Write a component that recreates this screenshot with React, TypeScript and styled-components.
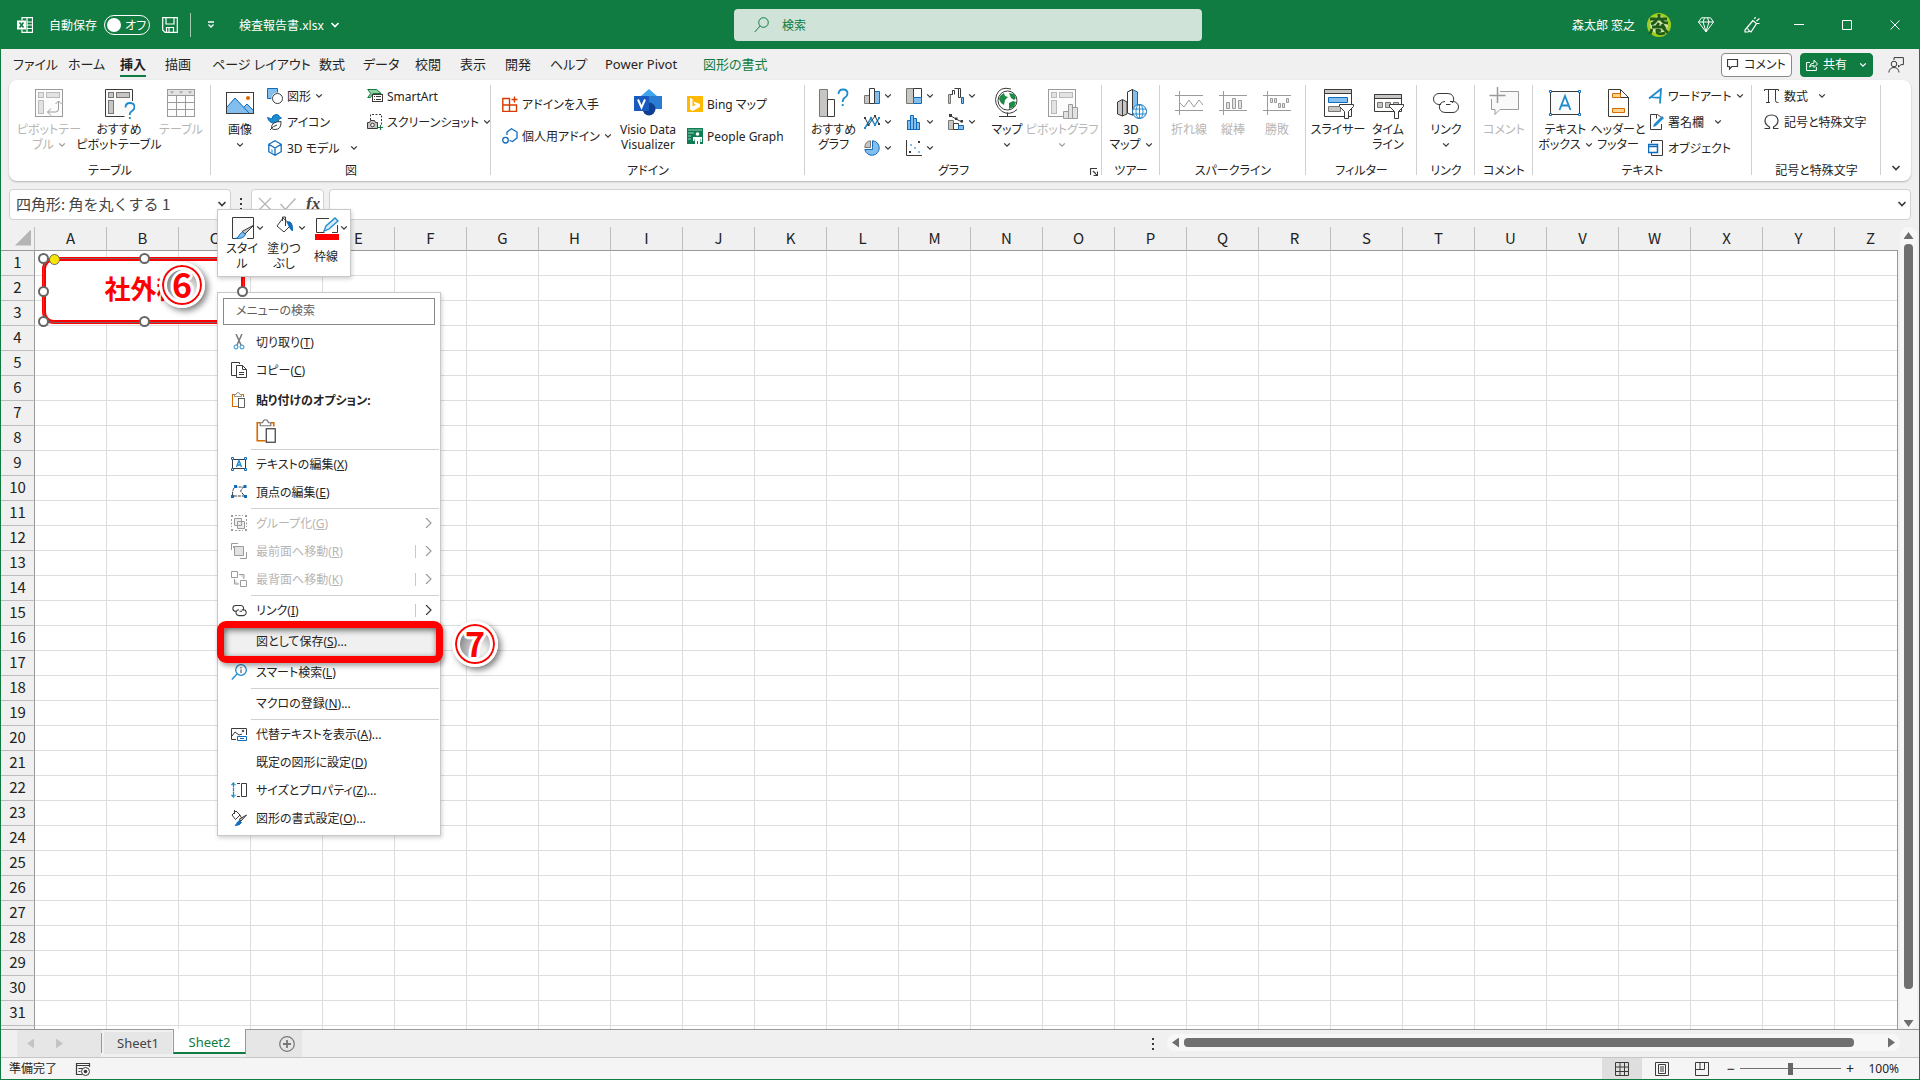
import React from "react";
import styled, { createGlobalStyle, css } from "styled-components";

const color = {
  brand: "#107c41",
  chrome: "#f0f0f0",
  text: "#252423",
  muted: "#b8b6b4",
  line: "#d1d1d1",
  ink: "#3b3a38",
  soft: "#c8c6c4",
  mid: "#797774",
  blue: "#1e8bcd",
  deep: "#0f6cbd",
  sky: "#83beec",
  red: "#ff0000",
};

const GlobalStyle = createGlobalStyle`
  *, *::before, *::after { box-sizing: border-box; }
  body {
    margin: 0;
    font-family: "Noto Sans", "Noto Sans CJK JP", sans-serif;
    font-size: 12px;
    line-height: 15px;
    color: ${color.text};
    font-feature-settings: "palt";
  }
  button, input { font: inherit; color: inherit; font-feature-settings: inherit; }
  button { padding: 0; border: 0; background: none; white-space: nowrap; }
  svg { display: block; flex: none; }
`;

/* ---------- Icons ---------- */

type IconProps = { size?: number; box?: number; stroke?: string; children: React.ReactNode };
const Icon = ({ size = 16, box, stroke = color.ink, children }: IconProps) => (
  <svg width={size} height={size} viewBox={`0 0 ${box ?? size} ${box ?? size}`} fill="none" stroke={stroke} strokeWidth={1} aria-hidden="true">
    {children}
  </svg>
);

const Chevron = ({ stroke = color.ink, size = 8 }: { stroke?: string; size?: number }) => (
  <svg width={size} height={size} viewBox="0 0 8 8" fill="none" stroke={stroke} strokeWidth={1.3} aria-hidden="true">
    <path d="M1.2 2.4 4 5.2 6.8 2.4" />
  </svg>
);

const PivotFrame = ({ children }: { children?: React.ReactNode }) => (
  <>
    <rect x="2.5" y="2.5" width="27" height="27" fill="#fafafa" stroke="none" />
    <rect x="5.5" y="5.5" width="5" height="5" fill={color.soft} stroke={color.mid} />
    <rect x="13.5" y="5.5" width="13" height="5" fill={color.soft} stroke={color.mid} />
    <rect x="5.5" y="13.5" width="5" height="13" fill={color.soft} stroke={color.mid} />
    {children}
  </>
);
const PivotTable = () => (
  <Icon size={32}>
    <PivotFrame />
    <rect x="2.5" y="2.5" width="27" height="27" />
    <path d="M25.5 14v8q0 3-3 3h-8M22.500 17l3-3 3 3M18 21.500l-3.500 3.500 3.500 3.500" />
  </Icon>
);
const RecommendedPivot = () => (
  <Icon size={32}>
    <PivotFrame />
    <path d="M29.500 14V2.500H2.500v27h19" />
    <path d="M22.500 20.500q0-4.500 4.500-4.500t4.500 4q0 2.500-2.500 4t-2.200 4M26.800 30v2" stroke={color.blue} strokeWidth="1.8" />
  </Icon>
);
const TableIcon = () => (
  <Icon size={32}>
    <rect x="2.5" y="2.5" width="27" height="27" fill="#fafafa" />
    <rect x="3" y="3" width="26" height="5.5" fill={color.soft} stroke="none" />
    <path d="M2.500 8.500h27M2.500 15.500h27M2.500 22.500h27M11.500 8.500v21M20.500 8.500v21" />
    <path d="m5 4.500 2 2 2-2zM14 4.500l2 2 2-2zM23 4.500l2 2 2-2z" fill={color.ink} stroke="none" />
  </Icon>
);
const Picture = () => (
  <Icon size={32}>
    <rect x="2.5" y="5.5" width="27" height="21" fill="#fff" />
    <path d="M3 20 11 11l9 9 3-3 6 6v3H3z" fill={color.sky} stroke="none" />
    <path d="M3 20 11 11l14 15M20 20l3-3 6 6" stroke={color.deep} />
    <circle cx="24" cy="11" r="2" fill="#e06c00" stroke="none" />
  </Icon>
);
const Shapes = () => (
  <Icon>
    <path d="M.5.5h10v10h-10z" fill={color.sky} stroke={color.deep} />
    <circle cx="10.5" cy="10.5" r="6" fill="#fff" stroke="none" />
    <circle cx="10.5" cy="10.5" r="5" fill="#fff" />
  </Icon>
);
const IconsIcon = () => (
  <Icon>
    <path d="M.5 3.500 5 5q0-4 4-4.500 3-.3 3.500 2.500l2 1-2.500 1q-.5 4-4 4.500-6-.3-7.500-6z" fill={color.blue} stroke={color.deep} />
    <path d="M4.500 14.500q-.5-7 9.500-7 .5 8-6 8-2 0-3.500-1zM3 16q3-4 7-5" fill="#fff" />
  </Icon>
);
const Cube = () => (
  <Icon stroke={color.deep}>
    <path d="m8 .8 6.200 3.500v7.400L8 15.200l-6.200-3.500V4.300zM1.800 4.300 8 8l6.200-3.700M8 8v7" fill="#fff" strokeWidth="1.3" />
    <path d="M4 9v3l2 1v-3z" fill={color.sky} stroke="none" />
  </Icon>
);
const SmartArt = () => (
  <Icon>
    <path d="M.7 1.500h9l4.500 4H6L3.500 9.500H.7l3-4z" fill="#92d3a4" stroke="#107c41" />
    <rect x="5.5" y="6.5" width="10" height="7" fill="#fff" />
    <path d="M7 8.500h1M9 8.500h5M7 11.500h1M9 11.500h5" />
  </Icon>
);
const Screenshot = () => (
  <Icon>
    <path d="M3.500 6V.5h11v10" strokeDasharray="2 1.5" />
    <path d="M.5 8.500h2l1-2h4l1 2h2v6H.5z" fill={color.soft} />
    <circle cx="5.5" cy="11" r="1.8" fill="#fff" />
    <path d="M13.500 11v5M11 13.500h5" stroke="#107c41" strokeWidth="1.2" />
  </Icon>
);
const GetAddins = () => (
  <Icon stroke="#d83b01">
    <path d="M.8 2.500h6.700v13H.8zM.8 9h13.700v6.500H7.500M7.500 9V5M12.500.5v6M9.500 3.500h6" strokeWidth="1.4" />
  </Icon>
);
const MyAddins = () => (
  <Icon stroke={color.deep}>
    <path d="M5 7V4l4.500-3.200L15 4v6l-4.500 3.500-3-1" strokeWidth="1.3" fill="#fff" />
    <circle cx="3.5" cy="12.2" r="2.8" strokeWidth="1.3" />
  </Icon>
);
const Visio = () => (
  <Icon size={32}>
    <path d="m17 2 8 7-8 7-8-7z" fill="#41a5ee" stroke="none" />
    <path d="M17 9h13v13H17z" fill="#2b7cd3" stroke="none" />
    <circle cx="17" cy="22" r="6.5" fill="#103f91" stroke="none" />
    <path d="M2 9h15v15H2z" fill="#185abd" stroke="none" />
    <path d="m6 12.500 3.500 8 3.500-8" stroke="#fff" strokeWidth="2" />
  </Icon>
);
const Bing = () => (
  <Icon>
    <path d="M0 0h16v16H0z" fill="#ffb900" stroke="none" />
    <path d="m3 2 2.500 1v7.500L9 8.800 7.500 8l-1-2.500L13 8v3l-7.500 4L3 13.500z" fill="#fff" stroke="none" />
  </Icon>
);
const People = () => (
  <Icon>
    <path d="M0 0h16v16H0z" fill="#107c54" stroke="none" />
    <path d="M1 2h14M1 5h6M1 8h3M1 11h3" stroke="#8fd1b5" />
    <circle cx="10.5" cy="6" r="1.8" fill="#fff" stroke="none" />
    <path d="M6 9h9v5h-1.500v-3h-.5v5h-2v-3h-1v3H8v-5h-.5v2H6z" fill="#fff" stroke="none" />
  </Icon>
);
const RecommendedChart = () => (
  <Icon size={32}>
    <path d="M2.500 2.500h8v27h-8z" fill={color.soft} stroke={color.mid} />
    <path d="M10.500 12.500h7v17h-7z" fill="#fff" />
    <path d="M21.500 7q0-4.500 4.500-4.500T30.500 6.500q0 2.500-2.500 4T25.700 15M25.700 17v2" stroke={color.blue} strokeWidth="1.8" />
  </Icon>
);
const Column = () => (
  <Icon>
    <path d="M.5 7.500h5v8h-5z" fill={color.soft} stroke={color.mid} />
    <path d="M10.500 3.500h5v12h-5z" fill={color.sky} stroke={color.deep} />
    <path d="M5.500.5h5v15h-5z" fill="#fff" />
  </Icon>
);
const Treemap = () => (
  <Icon>
    <path d="M.5.5h7v15h-7z" fill={color.soft} stroke={color.mid} />
    <path d="M7.500.5h8v9h-8z" fill="#fff" />
    <path d="M7.500 9.500h8v6h-8z" fill={color.sky} stroke={color.deep} />
  </Icon>
);
const Waterfall = () => (
  <Icon>
    <path d="M.5 6.500h2v9h-2z" fill={color.soft} stroke={color.mid} />
    <path d="M2.500 6.500h2v-4M4.500 6.500v-4h2v4M6.500.5h4v9h2v-9h-2" />
    <path d="M13.500 9.500h2v6h-2z" fill={color.sky} stroke={color.deep} />
  </Icon>
);
const LineChart = () => (
  <Icon>
    <path d="m1 14 6-10 4 7 4-7" stroke={color.blue} strokeWidth="1.5" />
    <path d="m1 4 3.500 7L11 2l4 8" />
    <path d="M0 3h2v2H0zM3.500 10h2v2h-2zM10 1h2v2h-2zM14 9h2v2h-2z" fill={color.ink} stroke="none" />
    <path d="M0 13h2v2H0zM6 3h2v2H6zM10 10h2v2h-2zM14 3h2v2h-2z" fill={color.blue} stroke="none" />
  </Icon>
);
const Histogram = () => (
  <Icon stroke={color.deep}>
    <path d="M1.500 15.500v-9h3v9M4.500 15.500v-14h3v14M7.500 15.500V4.500h3v11M10.500 15.500V8.500h3v7M1 15.500h13" fill={color.sky} />
  </Icon>
);
const Combo = () => (
  <Icon>
    <path d="M.5 6.500h5v9h-5z" fill={color.soft} stroke={color.mid} />
    <path d="M5.500 9.500h5v6h-5z" fill="#fff" />
    <path d="M10.500 11.500h5v4h-5z" fill={color.sky} stroke={color.deep} />
    <path d="m2 1.500 6 3.500 6 3" />
    <path d="M1 0h3v3H1zM7 3.500h2.500V6H7zM12.500 6H15v2.500h-2.500z" fill={color.ink} stroke="none" />
  </Icon>
);
const Pie = () => (
  <Icon>
    <path d="M8.500 7.500V.7A7.300 7.300 0 1 1 .8 9.500h7.700z" fill={color.sky} stroke={color.deep} />
    <path d="M6.500 7.500H.8Q1 1.500 6.500.8z" fill={color.soft} stroke={color.mid} />
  </Icon>
);
const Scatter = () => (
  <Icon>
    <path d="M.5 0v15.500H16" />
    <path d="M12 1h2v2h-2zM3 11h2v2H3z" fill={color.ink} stroke="none" />
    <path d="M4 4h2v2H4zM8 7h2v2H8zM12 11h2v2h-2z" fill={color.sky} stroke="none" />
  </Icon>
);
const Globe = () => (
  <Icon size={32}>
    <circle cx="16.500" cy="13.500" r="9.500" fill="#fff" />
    <path d="M20 2Q9-1 5.500 8T11 24.500q8 4.500 15-2M16.500 25.500V29M8 29.500h17" />
    <path d="m9 9 4-3 1 3 3 1-3 3-1 5-3-2-2-4zM18 6l5 1 2 4-2 2-3-2zM18 16l4-2 3 1-2 5-5 2z" fill="#1e8a44" stroke="none" />
  </Icon>
);
const PivotChart = () => (
  <Icon size={32}>
    <PivotFrame />
    <rect x="2.5" y="2.5" width="27" height="27" />
    <path d="M17.500 24.500h5v7h-5zM22.500 17.500h4v14h-4zM26.500 20.500h5v11h-5z" fill={color.soft} />
  </Icon>
);
const Map3D = () => (
  <Icon size={32}>
    <path d="m2.500 15 5-2.500 4.500 2.500v12l-4.500 2-5-2z" fill={color.soft} />
    <path d="M7.500 13v16" />
    <path d="m12.500 5 5-2.500L22.500 5v20l-5 3-5-2z" fill={color.sky} stroke={color.deep} />
    <path d="m12.500 5 5-2.500V28l-5-2z" fill="#fff" />
    <circle cx="24.5" cy="24.5" r="7" fill="#fff" stroke={color.deep} />
    <path d="M18 22h13M18 27h13M24.500 17.500v14" stroke={color.blue} />
    <ellipse cx="24.5" cy="24.5" rx="3.5" ry="7" stroke={color.blue} />
  </Icon>
);
const SparkFrame = ({ children }: { children: React.ReactNode }) => (
  <Icon size={32}>
    <path d="M2 8.500h28M2 23.500h28M6.500 4v24" />
    {children}
  </Icon>
);
const SparkLine = () => <SparkFrame><path d="m7 16 4 4 5-7 5 7 5-7 4 5" /></SparkFrame>;
const SparkColumn = () => <SparkFrame><path d="M9.500 15.500h3v6h-3zM15.500 11.500h3v10h-3zM21.500 13.500h3v8h-3z" fill={color.soft} /></SparkFrame>;
const WinLoss = () => <SparkFrame><path d="M9.500 11.500h2v4h-2zM13.500 11.500h2v4h-2zM17.500 16.500h2v4h-2zM21.500 16.500h2v4h-2zM25.500 11.500h2v4h-2z" fill={color.soft} /></SparkFrame>;
const Funnel = () => <path d="M17.500 17.500h14v2l-5 5v7h-4v-7l-5-5z" fill="#fff" />;
const Slicer = () => (
  <Icon size={32}>
    <path d="M2.500 2.500h27v27h-27z" fill="#fff" />
    <path d="M2.500 2.500h27v4h-27z" fill={color.soft} />
    <path d="M6.500 10.500h19v5h-19z" fill={color.sky} stroke={color.deep} />
    <path d="M6.500 19.500h12v5h-12z" fill={color.soft} stroke={color.mid} />
    <Funnel />
  </Icon>
);
const Timeline = () => (
  <Icon size={32}>
    <path d="M2.500 7.500h27v17h-27z" fill="#fff" />
    <path d="M2.500 7.500h27v4h-27z" fill={color.soft} />
    <path d="M5.500 15.500h5v5h-5zM13.500 15.500h5v5h-5zM21.500 15.500h5v5h-5z" fill={color.soft} stroke={color.mid} />
    <Funnel />
  </Icon>
);
const LinkPaths = () => (
  <>
    <path d="M11 17.500H9a5.500 5.500 0 0 1 0-11h9a5.500 5.500 0 0 1 4 9.500" />
    <path d="M20 14.500h3a5.500 5.500 0 0 1 0 11h-8a5.500 5.500 0 0 1-4-9.500q1.500-1.500 4-1.500M20.500 17.500H16" />
  </>
);
const LinkBig = () => <Icon size={32}><LinkPaths /></Icon>;
const LinkSmall = () => <Icon box={30}><g strokeWidth="2"><LinkPaths /></g></Icon>;
const CommentBig = () => (
  <Icon size={32}>
    <path d="M12 4.500h18.500v18H12l-5 5v-5H3.500V12" fill="#f4f4f4" />
    <path d="M9.500 0v16M1.500 8.500h16" strokeWidth="1.5" />
  </Icon>
);
const TextBox = () => (
  <Icon size={32}>
    <rect x="1.5" y="4.5" width="29" height="23" fill="#fafafa" />
    <path d="M.5 3.500h2v2h-2zM29.500 3.500h2v2h-2zM.5 26.500h2v2h-2zM29.500 26.500h2v2h-2z" fill="#fff" stroke={color.deep} />
    <path d="m10.500 23 5.500-14 5.500 14M12.500 18.500h7" stroke={color.blue} strokeWidth="1.8" />
  </Icon>
);
const HeaderFooter = () => (
  <Icon size={32}>
    <path d="M6.500 2.500h12l8 8v19h-20z" fill="#fff" />
    <path d="M18.500 2.500v8h8" />
    <path d="M10.500 6.500h8v4h-8zM10.500 21.500h12v4h-12z" fill="#ffd591" stroke="#d86c00" />
  </Icon>
);
const WordArt = () => (
  <Icon stroke={color.blue}>
    <path d="M1 10.500 13 1l-1 14.500M3 9q4 1 9.500.5" strokeWidth="1.8" />
  </Icon>
);
const Signature = () => (
  <Icon>
    <path d="M13.500 10v5.500h-11V.5h7l4 3" fill="#fff" />
    <path d="M8.500.5v4" />
    <path d="m5 13 1-3 8-8 2 2-8 8z" fill={color.blue} stroke="none" />
  </Icon>
);
const ObjectIcon = () => (
  <Icon>
    <path d="M3.500 3V.5h11v15h-11V13" fill="#fff" />
    <path d="M.5 4.500h9v8h-9z" fill="#fff" stroke={color.deep} strokeWidth="1.5" />
    <path d="M.5 6.500h9" stroke={color.deep} strokeWidth="1.5" />
  </Icon>
);
const Pi = () => <Icon><path d="M.5 3V1.500h14V3M4.500 1.500v13M11.500 1.500v11q0 2 2 2h1M2 14.500h4" /></Icon>;
const Omega = () => <Icon><path d="M.5 14.500h5V13Q1 10.500 1 6.500 1.500 1 7.500 1T14 6.500q0 4-4.500 6.500v1.500h5" strokeWidth="1.2" /></Icon>;

const ExcelLogo = () => (
  <Icon stroke="#fff">
    <path d="M5 3.500V.7h10.500v14.600H5V12.500M10 .7v14.600M10 5h5.500M10 8h5.500M10 11.500h5.500M5 .7h5" strokeWidth="1.2" />
    <path d="M0 3.500h9v9H0z" fill="#fff" stroke="none" />
    <path d="m2.500 5.500 4 5M6.500 5.500l-4 5" stroke={color.brand} strokeWidth="1.6" />
  </Icon>
);
const Save = () => <Icon stroke="#fff"><path d="M.7.7h14.600v14.600H3L.7 13zM4 .7V7h8V.7M4.500 15V10.500h7V15M7 11v4" strokeWidth="1.2" /></Icon>;
const QatMore = () => <Icon size={8} stroke="#fff"><path d="M1 1h6M1.500 3.500 4 6l2.500-2.500" strokeWidth="1.3" /></Icon>;
const Magnifier = () => <Icon stroke={color.brand}><circle cx="9.5" cy="5.5" r="4.8" /><path d="M6 9 .8 15" /></Icon>;
const Diamond = () => <Icon stroke="#fff"><path d="M3.500.8h9l3 4.200L8 15 .5 5zM.5 5h15M5 5l3 9.500L11 5M5 5 6.500.8M11 5 9.500.8" /></Icon>;
const Brush = () => <Icon stroke="#fff"><path d="M9 3.500 1 13v2h3l1.500-1 1.500 1 5.500-8.500zM5.500 14l-2-2.500M10.500 2l1-2M12.500 4l3-2.500M13 6.500h2.500" strokeWidth="1.2" /></Icon>;
const Minimize = () => <Icon size={10} stroke="#fff"><path d="M0 4.500h10" /></Icon>;
const Maximize = () => <Icon size={10} stroke="#fff"><path d="M.5.5h9v9h-9z" /></Icon>;
const Close = () => <Icon size={10} stroke="#fff"><path d="m.5.5 9 9M9.500.5l-9 9" /></Icon>;
const Avatar = () => (
  <Icon size={24} stroke="#1d5b17">
    <circle cx="12" cy="12" r="12" fill="#9fce1c" stroke="none" />
    <circle cx="12" cy="12" r="9" fill="#cfe3a8" stroke="none" />
    <path d="M3 6h17M12 1v4M4 11q4-1 6-5M14 6q1 4 7 4M5 14h4M12 10l-3 4h8l-2-3M5 16l-2 5M10 16v3q1 3 8 1M16 15l5 5M11 17l3 1" strokeWidth="2.8" />
  </Icon>
);
const CommentSmall = () => <Icon size={12}><path d="M.5.5h10v7H5L2.500 10V7.500h-2z" strokeWidth="1.2" /></Icon>;
const Share = () => <Icon size={12} stroke="#fff"><path d="M4 3.500H.6v8h9.800V8M3.500 8Q4 4 8 4V1l3.500 4L8 8.500v-2Q5 6.500 3.500 8z" /></Icon>;
const Presence = () => <Icon><path d="M6 3V.6h9.400v7H13L10.500 10V8" /><circle cx="6" cy="7" r="2.8" /><path d="M.8 15.500Q1.500 10.500 6 10.500t5 5" /></Icon>;
const Launcher = () => <Icon size={8}><path d="M.5 7V.5H7M3 3l4 4M7.500 3.500v4h-4" strokeWidth="1.2" /></Icon>;
const Cancel = () => <Icon size={14} stroke="#b5b5b5"><path d="m1 1 12 12M13 1 1 13" strokeWidth="1.3" /></Icon>;
const Accept = () => <Icon stroke="#b5b5b5"><path d="m.5 8 5 5.500 10-11" strokeWidth="1.3" /></Icon>;
const MacroIcon = () => (
  <Icon>
    <path d="M1.500 2.500h13M1.500 4.500h13M1.500 2v11.500H7M14.500 2v4M3.500 7.500h4M3.500 10.500h2" strokeWidth="1.2" />
    <circle cx="10.5" cy="10.5" r="4" />
    <circle cx="10.5" cy="10.5" r="1.8" fill={color.ink} stroke="none" />
  </Icon>
);
const PlusCircle = () => <Icon stroke={color.mid}><circle cx="8" cy="8" r="7.3" strokeWidth="1.2" /><path d="M8 4v8M4 8h8" strokeWidth="1.8" /></Icon>;
const NormalView = () => <Icon size={14}><path d="M.5.5h13v13H.5zM.5 5h13M.5 9.500h13M5 .5v13M9.500.5v13" /></Icon>;
const PageView = () => <Icon size={14}><path d="M.5.5h13v13H.5zM3.500 2.500h7v9h-7zM5 5h4M5 7h4M5 9h4" /></Icon>;
const BreakView = () => <Icon size={14}><path d="M.5.5h13v13H.5zM5 .5v7M9.500.5v7M.5 7.500h9" /></Icon>;

const Cut = () => (
  <Icon>
    <path d="m5 0 5 11M11 0 6 11" stroke={color.mid} strokeWidth="1.5" />
    <circle cx="5" cy="13" r="2" stroke={color.blue} /><circle cx="11" cy="13" r="2" stroke={color.blue} />
  </Icon>
);
const Copy = () => <Icon><path d="M8.500 2V.5H.5v13h5M5.500 3.500h6l4 4v8h-10zM11.500 3.500v4h4M8 10.500h5M8 12.500h5" /></Icon>;
const Paste = ({ size = 16 }: { size?: number }) => (
  <Icon size={size} box={16}>
    <path d="M3.500 2.500h-2v12H7M10.500 2.500h2V5" stroke="#d86c00" strokeWidth="1.1" />
    <path d="M3.500 4.500v-2H5q.5-2 2-2t2 2h1.500v2z" fill="#fff" stroke={color.mid} strokeWidth=".8" />
    <rect x="7.5" y="6.5" width="6" height="9" fill="#fff" strokeWidth=".8" />
  </Icon>
);
const EditText = () => (
  <Icon>
    <path d="M1.500 3.500h13v9h-13z" />
    <path d="M.5 1.500h2v2h-2zM13.500 1.500h2v2h-2zM.5 12.500h2v2h-2zM13.500 12.500h2v2h-2z" fill="#fff" stroke={color.deep} />
    <path d="m5.500 11 2.500-6.500 2.500 6.500M6.500 9h3" stroke={color.blue} strokeWidth="1.4" />
  </Icon>
);
const EditPoints = () => (
  <Icon>
    <path d="M1.500 11q0-7 3-8h5l3 0-3 4 4 5H3" strokeDasharray="3 1" />
    <path d="M3 1h3v3H3zM12.500 1h3v3h-3zM0 11h3v3H0zM13 11h3v3h-3z" fill={color.deep} stroke="none" />
  </Icon>
);
const Group = () => (
  <Icon>
    <path d="M3.500 3.500h7v7h-7zM6.500 6.500h7v7h-7z" fill="#ddd" />
    <path d="M4 .5h8M4 15.500h8M.5 4v8M15.500 4v8" strokeDasharray="2 1.5" />
    <path d="M0 0h2v2H0zM14 0h2v2h-2zM0 14h2v2H0zM14 14h2v2h-2z" fill={color.ink} stroke="none" />
  </Icon>
);
const Front = () => <Icon><path d="M.5 7V.5H7M2.500 5V3M15.500 9v6.500H9" /><path d="M3.500 3.500h9v9h-9z" fill={color.soft} /></Icon>;
const Back = () => <Icon><path d="M8 3.500h5V8M3.500 8v5H8" fill={color.soft} /><path d="M.5.5h6v6h-6zM9.500 9.500h6v6h-6z" fill="#fff" /></Icon>;
const SmartLookup = () => <Icon stroke={color.blue}><circle cx="10" cy="6" r="5.3" strokeWidth="1.3" /><path d="M6 10 .8 15.500" strokeWidth="1.3" /><path d="M10 5.500V9M10 3v1.300" stroke={color.ink} /></Icon>;
const AltText = () => (
  <Icon>
    <path d="M5 13.500H.5v-11h15V9M1 10l3-4 4 3 3-1" />
    <circle cx="12" cy="5" r=".8" fill={color.ink} />
    <path d="M6.500 10.500h9v4h-9zM9 12.500h4" stroke={color.deep} />
  </Icon>
);
const SizeIcon = () => (
  <Icon>
    <path d="M2.500 1v14M.5 3l2-2 2 2M.5 13l2 2 2-2" stroke={color.blue} strokeWidth="1.3" strokeDasharray="4 .5" />
    <path d="M6 1.500h3M6 14.500h3M10.500 1.500h5v13h-5z" />
  </Icon>
);
const FormatShape = () => (
  <Icon>
    <path d="m1 5 4-4 4 4-4.500 4.500zM3.500 0v4M9 5l1.500 3" />
    <path d="M15.500 5 10 11l-2-1.500z" fill={color.soft} />
    <path d="M4 15.500q2-1 2.500-3.500l2-1.500 2 2q-1.500 3-6.500 3z" fill={color.deep} stroke={color.deep} />
  </Icon>
);
const StyleIcon = () => (
  <Icon size={24}>
    <path d="M22.500 10V1.500h-21v21H6" fill="#fafafa" />
    <path d="M22.500 10v12.500H16" />
    <path d="m23 9-9 9-3-2.500z" fill={color.soft} />
    <path d="M5 22.500q3-1 3.500-4l3-2.500 3 2.500q-2 4.500-9.500 4z" fill={color.sky} stroke={color.deep} />
  </Icon>
);
const FillIcon = () => (
  <Icon size={24}>
    <path d="m4 10 6-8 8 7-7 7zM9.500 5V1h3v9" fill="#fff" />
    <path d="M14 6q6-2 5.500 9l-2-2z" fill={color.deep} stroke={color.deep} />
  </Icon>
);
const OutlineIcon = () => (
  <Icon size={24}>
    <path d="M14 2.500H1.500v14h8" />
    <path d="M17 16.500h5.500V9" />
    <path d="m9 15 2-5 9-8 3 3-9 8z" fill="#d6ebfa" stroke={color.blue} strokeWidth="1.3" />
    <path d="M0 18h24v6H0z" fill={color.red} stroke="none" />
  </Icon>
);

/* ---------- Window frame ---------- */

const Window = styled.div`
  position: relative;
  display: flex;
  flex-direction: column;
  height: 100vh;
  border: 1px solid ${color.brand};
  background: ${color.chrome};
  overflow: hidden;
`;

const TitleBar = styled.header`
  display: grid;
  grid-template-columns: 1fr 468px 1fr;
  align-items: center;
  flex: 0 0 48px;
  padding-left: 16px;
  background: ${color.brand};
  color: #fff;
`;

const TitleSide = styled.div<{ $end?: boolean }>`
  display: flex;
  align-items: center;
  justify-content: ${(p) => (p.$end ? "flex-end" : "flex-start")};
  gap: 12px;
  white-space: nowrap;
`;

const AutoSave = styled.label`
  display: flex;
  align-items: center;
  gap: 7px;
  margin-left: 4px;
`;

const SwitchTrack = styled.span`
  display: flex;
  align-items: center;
  gap: 4px;
  width: 46px;
  height: 20px;
  padding: 0 2px;
  border: 1px solid #fff;
  border-radius: 10px;
`;

const SwitchInput = styled.input`
  appearance: none;
  flex: none;
  width: 14px;
  height: 14px;
  margin: 0;
  border-radius: 50%;
  background: #fff;
`;

const QuickAccess = styled.div`
  display: flex;
  align-items: center;
  gap: 12px;
`;

const TitleDivider = styled.span`
  width: 1px;
  height: 24px;
  margin-right: 4px;
  background: #9fcbb3;
`;

const DocName = styled.button`
  display: flex;
  align-items: center;
  gap: 6px;
  margin-left: 12px;
`;

const SearchBox = styled.label`
  display: flex;
  align-items: center;
  gap: 12px;
  height: 32px;
  padding: 0 20px;
  border-radius: 4px;
  background: #cfe3d8;
  color: ${color.brand};
`;

const BareInput = styled.input`
  flex: 1;
  min-width: 0;
  padding: 0;
  border: 0;
  outline: 0;
  background: transparent;
  &::placeholder { color: inherit; opacity: 1; }
`;

const WindowButtons = styled.div`
  display: flex;
`;

const CaptionButton = styled.button<{ $w: number }>`
  display: grid;
  place-items: center;
  width: ${(p) => p.$w}px;
  height: 48px;
`;

/* ---------- Tabs ---------- */

const TabRow = styled.div`
  display: flex;
  align-items: center;
  justify-content: space-between;
  flex: 0 0 31px;
  padding: 0 15px 0 12px;
`;

const Tabs = styled.nav`
  display: flex;
`;

const Tab = styled.button<{ $w: number; $active?: boolean; $context?: boolean }>`
  width: ${(p) => p.$w}px;
  height: 30px;
  font-size: 13px;
  text-align: left;
  color: ${(p) => (p.$context ? color.brand : "inherit")};
  span {
    display: inline-block;
    padding: 5px 0 3px;
    border-bottom: 2px solid transparent;
    ${(p) => p.$active && css`border-color: ${color.brand}; font-weight: 700;`}
  }
`;

const TabActions = styled.div`
  display: flex;
  align-items: center;
  gap: 8px;
`;

const PillButton = styled.button<{ $primary?: boolean }>`
  display: flex;
  align-items: center;
  justify-content: center;
  gap: 5px;
  width: ${(p) => (p.$primary ? 73 : 71)}px;
  height: 24px;
  border: 1px solid ${(p) => (p.$primary ? color.brand : "#8a8886")};
  border-radius: 4px;
  background: ${(p) => (p.$primary ? color.brand : "#fff")};
  color: ${(p) => (p.$primary ? "#fff" : "inherit")};
`;

const PresenceButton = styled.button`
  padding-left: 7px;
`;

/* ---------- Ribbon ---------- */

const Ribbon = styled.section`
  display: flex;
  flex: 0 0 101px;
  margin: 0 8px;
  padding-top: 3px;
  border-radius: 8px;
  background: #fff;
  box-shadow: 0 1px 2px rgba(0, 0, 0, 0.25);
`;

const RibbonGroup = styled.div<{ $w: number }>`
  position: relative;
  display: flex;
  flex-direction: column;
  flex: 0 0 ${(p) => p.$w}px;
  &::after {
    content: "";
    position: absolute;
    right: 0;
    top: 2px;
    bottom: 6px;
    width: 1px;
    background: ${color.line};
  }
`;

const GroupBody = styled.div<{ $pad: number }>`
  display: flex;
  flex: 0 0 78px;
  padding-left: ${(p) => p.$pad}px;
`;

const GroupLabel = styled.div`
  text-align: center;
  line-height: 20px;
`;

const LauncherButton = styled.button`
  position: absolute;
  right: 4px;
  bottom: 5px;
`;

const BigButton = styled.button<{ $w: number }>`
  display: flex;
  flex-direction: column;
  align-items: center;
  flex: 0 0 ${(p) => p.$w}px;
  width: ${(p) => p.$w}px;
  padding-top: 4px;
  gap: 3px;
  &:disabled { color: ${color.muted}; }
  &:disabled svg { opacity: 0.5; filter: grayscale(1); }
`;

const BigLabel = styled.span`
  display: flex;
  flex-direction: column;
  align-items: center;
  span { display: flex; align-items: center; justify-content: center; gap: 4px; height: 15px; }
`;

const ButtonStack = styled.div<{ $w: number; $rows?: number; $pad?: number }>`
  display: grid;
  grid-template-rows: repeat(${(p) => p.$rows ?? 3}, ${(p) => (p.$rows === 2 ? 32 : 26)}px);
  flex: 0 0 ${(p) => p.$w}px;
  padding-top: ${(p) => (p.$rows === 2 ? 5 : 0)}px;
  padding-left: ${(p) => p.$pad ?? 0}px;
`;

const SmallButton = styled.button<{ $far?: boolean }>`
  display: flex;
  align-items: center;
  gap: 4px;
  padding-left: 2px;
  & > svg:last-child:not(:first-child) { margin-left: ${(p) => (p.$far ? 6 : 0)}px; }
`;

const ChartGrid = styled.div`
  display: grid;
  grid-template: repeat(3, 26px) / repeat(3, 42px);
  flex: 0 0 126px;
`;

const RibbonEnd = styled.div`
  display: flex;
  flex: 1;
  align-items: flex-end;
  justify-content: center;
  padding-bottom: 8px;
`;

type BigProps = { icon: React.ReactNode; lines: string[]; w: number; drop?: "below" | "inline"; disabled?: boolean };
const Big = ({ icon, lines, w, drop, disabled }: BigProps) => (
  <BigButton $w={w} disabled={disabled}>
    {icon}
    <BigLabel>
      {lines.map((line, i) => (
        <span key={line}>
          {line}
          {drop === "inline" && i === lines.length - 1 && <Chevron />}
        </span>
      ))}
      {drop === "below" && <span><Chevron /></span>}
    </BigLabel>
  </BigButton>
);

type SmallProps = { icon: React.ReactNode; label?: string; name?: string; drop?: boolean; far?: boolean };
const Small = ({ icon, label, name, drop, far }: SmallProps) => (
  <SmallButton $far={far} aria-label={name}>
    {icon}
    {label}
    {drop && <Chevron />}
  </SmallButton>
);

type GroupProps = { label: string; w: number; pad?: number; launcher?: boolean; children: React.ReactNode };
const RGroup = ({ label, w, pad = 0, launcher, children }: GroupProps) => (
  <RibbonGroup $w={w}>
    <GroupBody $pad={pad}>{children}</GroupBody>
    <GroupLabel>{label}</GroupLabel>
    {launcher && <LauncherButton aria-label="グラフの詳細"><Launcher /></LauncherButton>}
  </RibbonGroup>
);

/* ---------- Formula bar ---------- */

const FormulaRow = styled.div`
  display: flex;
  flex: 0 0 46px;
  align-items: center;
  padding: 0 8px;
`;

const Field = styled.div<{ $w?: number }>`
  display: flex;
  align-items: center;
  flex: ${(p) => (p.$w ? `0 0 ${p.$w}px` : "1")};
  height: 31px;
  padding: 0 3px 0 6px;
  gap: 8px;
  border: 1px solid ${color.line};
  border-radius: 4px;
  background: #fff;
`;

const SheetInput = styled(BareInput)`
  font-family: "Noto Sans CJK JP", sans-serif;
  font-size: 15px;
  line-height: 24px;
  font-feature-settings: normal;
  color: #444;
`;

const Grip = styled.span`
  display: grid;
  align-self: center;
  gap: 3px;
  width: 20px;
  justify-content: center;
  &::before, &::after, i { content: ""; width: 2px; height: 2px; background: ${color.ink}; }
`;

const FxLabel = styled.button`
  margin-left: 2px;
  font: italic 700 17px/20px "Liberation Serif", serif;
  color: #444;
`;

const Spacer = styled.span<{ $w: number }>`
  flex: 0 0 ${(p) => p.$w}px;
`;

/* ---------- Sheet ---------- */

const SheetArea = styled.div`
  display: flex;
  flex: 1;
  min-height: 0;
  border-bottom: 1px solid #999;
`;

const SheetView = styled.div`
  position: relative;
  flex: 1;
  min-width: 0;
  overflow: hidden;
  &::after {
    content: "";
    position: absolute;
    top: 23px;
    right: 0;
    bottom: 0;
    width: 1px;
    background: #999;
  }
`;

const Grid = styled.table`
  table-layout: fixed;
  width: 1906px;
  border-collapse: separate;
  border-spacing: 0;
  font-family: "Noto Sans CJK JP", sans-serif;
  font-size: 15px;
  line-height: 20px;
  color: #222;
  th { padding: 0 0 2px; font-weight: 400; text-align: center; background: ${color.chrome}; }
  thead th { height: 24px; border-right: 1px solid #bdbdbd; border-bottom: 1px solid #999; }
  tbody th { height: 25px; border-right: 1px solid #999; border-bottom: 1px solid #bdbdbd; }
  td { padding: 0; background: #fff; border-right: 1px solid #dedede; border-bottom: 1px solid #dedede; }
  col { width: 72px; }
  col:first-child { width: 34px; }
`;

const Corner = styled.span`
  display: block;
  width: 16px;
  height: 16px;
  margin-left: 14px;
  background: #b5b5b5;
  clip-path: polygon(100% 0, 100% 100%, 0 100%);
`;

const SheetShape = styled.div`
  position: absolute;
  left: 41px;
  top: 30px;
  width: 203px;
  height: 67px;
  display: grid;
  place-items: center;
  padding-bottom: 6px;
  border: 4px solid ${color.red};
  border-radius: 12px;
  background: #fff;
  color: ${color.red};
  font: 700 26px/36px "Noto Sans CJK JP", sans-serif;
  font-feature-settings: normal;
  &::after {
    content: "";
    position: absolute;
    inset: -3px;
    border: 1px solid #806060;
    border-radius: 11px;
  }
`;

const Handle = styled.i<{ $x: string; $y: string; $adjust?: boolean }>`
  position: absolute;
  z-index: 1;
  left: ${(p) => p.$x};
  top: ${(p) => p.$y};
  width: 11px;
  height: 11px;
  margin: -5px 0 0 -5px;
  border: ${(p) => (p.$adjust ? 1 : 2)}px solid #666;
  border-radius: 50%;
  background: ${(p) => (p.$adjust ? "#ffe600" : "#fff")};
`;

const Arrow = styled.button<{ $dir: "up" | "down" | "left" | "right"; $pale?: boolean }>`
  width: ${(p) => (p.$dir === "up" || p.$dir === "down" ? 10 : 7)}px;
  height: ${(p) => (p.$dir === "up" || p.$dir === "down" ? 7 : 10)}px;
  background: ${(p) => (p.$pale ? "#c4c4c4" : "#6e6e6e")};
  clip-path: ${(p) =>
    ({
      up: "polygon(50% 0, 100% 100%, 0 100%)",
      down: "polygon(0 0, 100% 0, 50% 100%)",
      left: "polygon(100% 0, 100% 100%, 0 50%)",
      right: "polygon(0 0, 100% 50%, 0 100%)",
    })[p.$dir]};
`;

const VerticalScroll = styled.div`
  display: flex;
  flex-direction: column;
  align-items: center;
  gap: 5px;
  flex: 0 0 17px;
  margin: 0 2px;
  padding: 5px 0 2px;
  border-radius: 8px;
  background: #f7f7f7;
`;

const Thumb = styled.div<{ $vertical?: boolean }>`
  flex: 1;
  border-radius: 4px;
  background: #707070;
  ${(p) => (p.$vertical ? "width: 9px; margin-bottom: 26px;" : "height: 9px; margin-right: 29px;")}
`;

/* ---------- Sheet tabs and status bar ---------- */

const SheetBar = styled.div`
  display: flex;
  flex: 0 0 27px;
  background: ${color.chrome};
`;

const SheetNav = styled.div`
  display: flex;
  align-items: center;
  gap: 22px;
  width: 84px;
  margin-left: 16px;
  padding-left: 10px;
  background: #e6e6e6;
`;

const NavDivider = styled.span`
  width: 1px;
  margin: 3px 2px 4px 0;
  background: #999;
`;

const SheetTab = styled.button<{ $active?: boolean }>`
  width: ${(p) => (p.$active ? 73 : 68)}px;
  margin: ${(p) => (p.$active ? "-1px 0 3px 1px" : "2px 0 3px")};
  background: ${(p) => (p.$active ? "#fff" : "#e6e6e6")};
  color: ${(p) => (p.$active ? color.brand : "#444")};
  font-size: 13px;
  ${(p) => p.$active && css`
    z-index: 1;
    padding-top: 3px;
    border-left: 1px solid #999;
    border-right: 1px solid #999;
    border-bottom: 2px solid ${color.brand};
  `}
`;

const AddSheet = styled.button`
  display: grid;
  place-items: center;
  width: 56px;
  padding-left: 26px;
  background: #e6e6e6;
`;

const BarFill = styled.span`
  flex: 1;
`;

const HorizontalScroll = styled.div`
  display: flex;
  align-items: center;
  gap: 5px;
  flex: 0 0 733px;
  height: 17px;
  margin: 4px 19px 0 4px;
  padding: 0 5px;
  border-radius: 8px;
  background: #f7f7f7;
`;

const StatusBar = styled.footer`
  display: flex;
  align-items: center;
  flex: 0 0 22px;
  padding: 0 20px 0 8px;
  border-top: 1px solid #c6c6c6;
  background: #f5f5f5;
`;

const MacroButton = styled.button`
  margin-left: 18px;
`;

const ViewButton = styled.button<{ $active?: boolean }>`
  display: grid;
  place-items: center;
  width: 40px;
  height: 21px;
  background: ${(p) => (p.$active ? "#dedede" : "transparent")};
`;

const ZoomGroup = styled.div`
  display: flex;
  align-items: center;
  gap: 5px;
  margin-left: 5px;
  button { width: 8px; font-size: 14px; }
  output { width: 36px; margin-left: 4px; text-align: right; }
`;

const ZoomSlider = styled.input`
  appearance: none;
  width: 101px;
  height: 12px;
  margin: 0;
  background: linear-gradient(#707070, #707070) center / 100% 1px no-repeat;
  &::-webkit-slider-thumb {
    appearance: none;
    width: 5px;
    height: 12px;
    background: #666;
  }
`;

/* ---------- Floating mini toolbar and context menu ---------- */

const floating = css`
  position: absolute;
  left: 216px;
  border: 1px solid #c8c8c8;
  background: #fff;
  box-shadow: 1px 2px 4px rgba(0, 0, 0, 0.18);
`;

const MiniToolbar = styled.div`
  ${floating}
  top: 208px;
  display: flex;
  width: 134px;
  height: 68px;
  padding: 5px 0 0 6px;
`;

const MiniButton = styled.button`
  display: flex;
  flex-direction: column;
  align-items: center;
  gap: 1px;
  width: 42px;
`;

const MiniIcon = styled.span`
  display: flex;
  align-items: center;
  justify-content: center;
  gap: 1px;
  height: 25px;
  padding-left: 4px;
`;

const MiniLabel = styled.span`
  display: grid;
  align-content: center;
  height: 30px;
  padding-right: 6px;
`;

const ContextMenu = styled.div`
  ${floating}
  top: 291px;
  width: 224px;
  padding: 5px 0 2px;
`;

const MenuSearch = styled.input`
  display: block;
  width: 212px;
  height: 27px;
  margin: 0 0 4px 5px;
  padding: 0 12px 2px;
  border: 1px solid #8a8886;
  &::placeholder { color: #605e5c; opacity: 1; }
`;

const MenuButton = styled.button<{ $hover?: boolean }>`
  display: grid;
  grid-template-columns: 16px 1fr auto;
  align-items: center;
  gap: 9px;
  width: 100%;
  height: 28px;
  padding: 0 7px 2px 13px;
  text-align: left;
  background: ${(p) => (p.$hover ? "#f0f0f0" : "transparent")};
  &:disabled { color: ${color.muted}; }
  &:disabled svg { opacity: 0.5; }
`;

const SubArrow = styled.span<{ $split?: boolean }>`
  display: flex;
  align-items: center;
  height: 13px;
  padding-left: 7px;
  border-left: 1px solid ${(p) => (p.$split ? "#c8c8c8" : "transparent")};
`;

const MenuHeading = styled.div`
  display: grid;
  grid-template-columns: 16px 1fr;
  align-items: center;
  gap: 9px;
  height: 32px;
  padding: 0 0 2px 13px;
  font-weight: 700;
`;

const PasteRow = styled.div`
  display: flex;
  align-items: center;
  height: 31px;
  padding: 0 0 4px 37px;
`;

const MenuRule = styled.hr`
  height: 1px;
  margin: 1px 1px 1px 33px;
  border: 0;
  background: ${color.line};
`;

type ItemProps = { icon?: React.ReactNode; label: string; k: string; more?: boolean; sub?: "plain" | "split"; disabled?: boolean; hover?: boolean };
const Item = ({ icon, label, k, more, sub, disabled, hover }: ItemProps) => (
  <MenuButton role="menuitem" disabled={disabled} $hover={hover}>
    {icon ?? <span />}
    <span>{label}(<u>{k}</u>){more && "..."}</span>
    {sub && (
      <SubArrow $split={sub === "split"}>
        <Icon size={10}><path d="m3 0 5 5-5 5" strokeWidth="1.2" /></Icon>
      </SubArrow>
    )}
  </MenuButton>
);

/* ---------- Callouts ---------- */

const Highlight = styled.div`
  position: absolute;
  left: 216px;
  top: 620px;
  width: 226px;
  height: 42px;
  border: 7px solid ${color.red};
  border-radius: 9px;
  box-shadow: 2px 3px 5px rgba(0, 0, 0, 0.35), inset 1px 2px 6px rgba(0, 0, 0, 0.6);
`;

const Badge = styled.div<{ $x: number; $y: number }>`
  position: absolute;
  left: ${(p) => p.$x}px;
  top: ${(p) => p.$y}px;
  display: grid;
  place-items: center;
  width: 46px;
  height: 46px;
  padding-bottom: 2px;
  border: 3px solid #fff;
  border-radius: 50%;
  background: radial-gradient(circle at 65% 65%, #eee 10%, #8f8f8f 60%);
  box-shadow: inset 0 0 0 2px ${color.red}, inset 0 0 0 5px #fff, 3px 3px 6px rgba(0, 0, 0, 0.5);
  color: ${color.red};
  font: 700 34px/38px "Noto Sans CJK JP", sans-serif;
  text-shadow: 3px 0 #fff, -3px 0 #fff, 0 3px #fff, 0 -3px #fff, 2px 2px #fff, -2px -2px #fff, 2px -2px #fff, -2px 2px #fff;
`;

/* ---------- Data ---------- */

const tabs: { label: string; w: number; active?: boolean; context?: boolean }[] = [
  { label: "ファイル", w: 55 },
  { label: "ホーム", w: 52 },
  { label: "挿入", w: 45, active: true },
  { label: "描画", w: 47 },
  { label: "ページ レイアウト", w: 107 },
  { label: "数式", w: 44 },
  { label: "データ", w: 52 },
  { label: "校閲", w: 45 },
  { label: "表示", w: 45 },
  { label: "開発", w: 45 },
  { label: "ヘルプ", w: 55 },
  { label: "Power Pivot", w: 98 },
  { label: "図形の書式", w: 70, context: true },
];

const columns = "ABCDEFGHIJKLMNOPQRSTUVWXYZ".split("");
const rows = Array.from({ length: 31 }, (_, i) => String(i + 1)).concat("");

const charts: [React.ReactNode, string][] = [
  [<Column />, "縦棒"], [<Treemap />, "階層構造"], [<Waterfall />, "ウォーターフォール"],
  [<LineChart />, "折れ線"], [<Histogram />, "統計"], [<Combo />, "組み合わせ"],
  [<Pie />, "円"], [<Scatter />, "散布図"],
];

export default function App() {
  return (
    <Window>
      <GlobalStyle />
      <TitleBar>
        <TitleSide>
          <ExcelLogo />
          <AutoSave>
            自動保存
            <SwitchTrack><SwitchInput type="checkbox" role="switch" />オフ</SwitchTrack>
          </AutoSave>
          <QuickAccess>
            <button aria-label="上書き保存"><Save /></button>
            <TitleDivider />
            <button aria-label="クイック アクセス"><QatMore /></button>
          </QuickAccess>
          <DocName>検査報告書.xlsx <Chevron stroke="#fff" size={10} /></DocName>
        </TitleSide>
        <SearchBox>
          <Magnifier />
          <BareInput type="search" placeholder="検索" aria-label="検索" />
        </SearchBox>
        <TitleSide $end>
          <span>森太郎 窓之</span>
          <Avatar />
          <WindowButtons>
            <CaptionButton $w={46} aria-label="プレミアム"><Diamond /></CaptionButton>
            <CaptionButton $w={46} aria-label="近日公開"><Brush /></CaptionButton>
            <CaptionButton $w={48} aria-label="最小化"><Minimize /></CaptionButton>
            <CaptionButton $w={48} aria-label="最大化"><Maximize /></CaptionButton>
            <CaptionButton $w={48} aria-label="閉じる"><Close /></CaptionButton>
          </WindowButtons>
        </TitleSide>
      </TitleBar>

      <TabRow>
        <Tabs>
          {tabs.map((t) => (
            <Tab key={t.label} $w={t.w} $active={t.active} $context={t.context}><span>{t.label}</span></Tab>
          ))}
        </Tabs>
        <TabActions>
          <PillButton><CommentSmall />コメント</PillButton>
          <PillButton $primary><Share />共有<Spacer $w={2} /><Chevron stroke="#fff" /></PillButton>
          <PresenceButton aria-label="共同作業"><Presence /></PresenceButton>
        </TabActions>
      </TabRow>

      <Ribbon>
        <RGroup label="テーブル" w={202} pad={5}>
          <Big icon={<PivotTable />} lines={["ピボットテー", "ブル"]} w={70} drop="inline" disabled />
          <Big icon={<RecommendedPivot />} lines={["おすすめ", "ピボットテーブル"]} w={70} />
          <Big icon={<TableIcon />} lines={["テーブル"]} w={54} disabled />
        </RGroup>
        <RGroup label="図" w={279} pad={4}>
          <Big icon={<Picture />} lines={["画像"]} w={50} drop="below" />
          <ButtonStack $w={100}>
            <Small icon={<Shapes />} label="図形" drop />
            <Small icon={<IconsIcon />} label="アイコン" />
            <Small icon={<Cube />} label="3D モデル" drop far />
          </ButtonStack>
          <ButtonStack $w={120}>
            <Small icon={<SmartArt />} label="SmartArt" />
            <Small icon={<Screenshot />} label="スクリーンショット" drop />
          </ButtonStack>
        </RGroup>
        <RGroup label="アドイン" w={314} pad={9}>
          <ButtonStack $w={113} $rows={2}>
            <Small icon={<GetAddins />} label="アドインを入手" />
            <Small icon={<MyAddins />} label="個人用アドイン" drop />
          </ButtonStack>
          <Big icon={<Visio />} lines={["Visio Data", "Visualizer"]} w={70} />
          <ButtonStack $w={116} $rows={2} $pad={2}>
            <Small icon={<Bing />} label="Bing マップ" />
            <Small icon={<People />} label="People Graph" />
          </ButtonStack>
        </RGroup>
        <RGroup label="グラフ" w={297} launcher>
          <Big icon={<RecommendedChart />} lines={["おすすめ", "グラフ"]} w={57} />
          <ChartGrid>
            {charts.map(([icon, name]) => <Small key={name} icon={icon} name={name} drop />)}
          </ChartGrid>
          <Big icon={<Globe />} lines={["マップ"]} w={38} drop="below" />
          <Big icon={<PivotChart />} lines={["ピボットグラフ"]} w={72} drop="below" disabled />
        </RGroup>
        <RGroup label="ツアー" w={58}>
          <Big icon={<Map3D />} lines={["3D", "マップ"]} w={58} drop="inline" />
        </RGroup>
        <RGroup label="スパークライン" w={146} pad={7}>
          <Big icon={<SparkLine />} lines={["折れ線"]} w={44} disabled />
          <Big icon={<SparkColumn />} lines={["縦棒"]} w={44} disabled />
          <Big icon={<WinLoss />} lines={["勝敗"]} w={44} disabled />
        </RGroup>
        <RGroup label="フィルター" w={111} pad={7}>
          <Big icon={<Slicer />} lines={["スライサー"]} w={50} />
          <Big icon={<Timeline />} lines={["タイム", "ライン"]} w={50} />
        </RGroup>
        <RGroup label="リンク" w={58}>
          <Big icon={<LinkBig />} lines={["リンク"]} w={58} drop="below" />
        </RGroup>
        <RGroup label="コメント" w={58}>
          <Big icon={<CommentBig />} lines={["コメント"]} w={58} disabled />
        </RGroup>
        <RGroup label="テキスト" w={219} pad={3}>
          <Big icon={<TextBox />} lines={["テキスト", "ボックス"]} w={59} drop="inline" />
          <Big icon={<HeaderFooter />} lines={["ヘッダーと", "フッター"]} w={46} />
          <ButtonStack $w={106} $pad={5}>
            <Small icon={<WordArt />} label="ワードアート" drop />
            <Small icon={<Signature />} label="署名欄" drop far />
            <Small icon={<ObjectIcon />} label="オブジェクト" />
          </ButtonStack>
        </RGroup>
        <RGroup label="記号と特殊文字" w={129} pad={10}>
          <ButtonStack $w={110}>
            <Small icon={<Pi />} label="数式" drop far />
            <Small icon={<Omega />} label="記号と特殊文字" />
          </ButtonStack>
        </RGroup>
        <RibbonEnd><button aria-label="リボンを折りたたむ"><Chevron size={10} /></button></RibbonEnd>
      </Ribbon>

      <FormulaRow>
        <Field $w={222}>
          <SheetInput defaultValue="四角形: 角を丸くする 1" aria-label="名前ボックス" />
          <button aria-label="名前の一覧"><Chevron size={10} /></button>
        </Field>
        <Grip><i /></Grip>
        <Field $w={73}>
          <button aria-label="キャンセル"><Cancel /></button>
          <button aria-label="入力"><Accept /></button>
          <FxLabel>fx</FxLabel>
        </Field>
        <Spacer $w={5} />
        <Field>
          <SheetInput aria-label="数式バー" />
          <button aria-label="数式バーの展開"><Chevron size={10} /></button>
        </Field>
      </FormulaRow>

      <SheetArea>
        <SheetView>
          <Grid>
            <colgroup><col />{columns.map((c) => <col key={c} />)}</colgroup>
            <thead>
              <tr><th><Corner /></th>{columns.map((c) => <th key={c} scope="col">{c}</th>)}</tr>
            </thead>
            <tbody>
              {rows.map((r, i) => (
                <tr key={i}><th scope="row">{r}</th>{columns.map((c) => <td key={c} />)}</tr>
              ))}
            </tbody>
          </Grid>
          <SheetShape>
            社外秘
            <Handle $x="-3px" $y="-3px" />
            <Handle $x="50%" $y="-3px" />
            <Handle $x="-3px" $y="50%" />
            <Handle $x="calc(100% + 1px)" $y="50%" />
            <Handle $x="-3px" $y="calc(100% + 1px)" />
            <Handle $x="50%" $y="calc(100% + 1px)" />
            <Handle $x="8px" $y="-2px" $adjust />
          </SheetShape>
        </SheetView>
        <VerticalScroll>
          <Arrow $dir="up" aria-label="上へ" />
          <Thumb $vertical />
          <Arrow $dir="down" aria-label="下へ" />
        </VerticalScroll>
      </SheetArea>

      <SheetBar>
        <SheetNav>
          <Arrow $dir="left" $pale aria-label="前のシート" />
          <Arrow $dir="right" $pale aria-label="次のシート" />
        </SheetNav>
        <NavDivider />
        <SheetTab>Sheet1</SheetTab>
        <SheetTab $active>Sheet2</SheetTab>
        <AddSheet aria-label="新しいシート"><PlusCircle /></AddSheet>
        <BarFill />
        <Grip><i /></Grip>
        <HorizontalScroll>
          <Arrow $dir="left" aria-label="左へ" />
          <Thumb />
          <Arrow $dir="right" aria-label="右へ" />
        </HorizontalScroll>
      </SheetBar>

      <StatusBar>
        <span>準備完了</span>
        <MacroButton aria-label="マクロの記録"><MacroIcon /></MacroButton>
        <BarFill />
        <ViewButton $active aria-label="標準"><NormalView /></ViewButton>
        <ViewButton aria-label="ページ レイアウト表示"><PageView /></ViewButton>
        <ViewButton aria-label="改ページ プレビュー"><BreakView /></ViewButton>
        <ZoomGroup>
          <button>−</button>
          <ZoomSlider type="range" min={0} max={200} defaultValue={100} aria-label="ズーム" />
          <button>+</button>
          <output>100%</output>
        </ZoomGroup>
      </StatusBar>

      <MiniToolbar role="toolbar">
        <MiniButton>
          <MiniIcon><StyleIcon /><Chevron /></MiniIcon>
          <MiniLabel><span>スタイ</span><span>ル</span></MiniLabel>
        </MiniButton>
        <MiniButton>
          <MiniIcon><FillIcon /><Chevron /></MiniIcon>
          <MiniLabel><span>塗りつ</span><span>ぶし</span></MiniLabel>
        </MiniButton>
        <MiniButton>
          <MiniIcon><OutlineIcon /><Chevron /></MiniIcon>
          <MiniLabel><span>枠線</span></MiniLabel>
        </MiniButton>
      </MiniToolbar>

      <ContextMenu role="menu">
        <MenuSearch placeholder="メニューの検索" aria-label="メニューの検索" />
        <Item icon={<Cut />} label="切り取り" k="T" />
        <Item icon={<Copy />} label="コピー" k="C" />
        <MenuHeading><Paste /><span>貼り付けのオプション:</span></MenuHeading>
        <PasteRow><button aria-label="貼り付け"><Paste size={24} /></button></PasteRow>
        <MenuRule />
        <Item icon={<EditText />} label="テキストの編集" k="X" />
        <Item icon={<EditPoints />} label="頂点の編集" k="E" />
        <MenuRule />
        <Item icon={<Group />} label="グループ化" k="G" sub="plain" disabled />
        <Item icon={<Front />} label="最前面へ移動" k="R" sub="split" disabled />
        <Item icon={<Back />} label="最背面へ移動" k="K" sub="split" disabled />
        <MenuRule />
        <Item icon={<LinkSmall />} label="リンク" k="I" sub="split" />
        <MenuRule />
        <Item label="図として保存" k="S" more hover />
        <MenuRule />
        <Item icon={<SmartLookup />} label="スマート検索" k="L" />
        <MenuRule />
        <Item label="マクロの登録" k="N" more />
        <MenuRule />
        <Item icon={<AltText />} label="代替テキストを表示" k="A" more />
        <Item label="既定の図形に設定" k="D" />
        <Item icon={<SizeIcon />} label="サイズとプロパティ" k="Z" more />
        <Item icon={<FormatShape />} label="図形の書式設定" k="O" more />
      </ContextMenu>

      <Highlight />
      <Badge $x={158} $y={261}>6</Badge>
      <Badge $x={451} $y={620}>7</Badge>
    </Window>
  );
}
